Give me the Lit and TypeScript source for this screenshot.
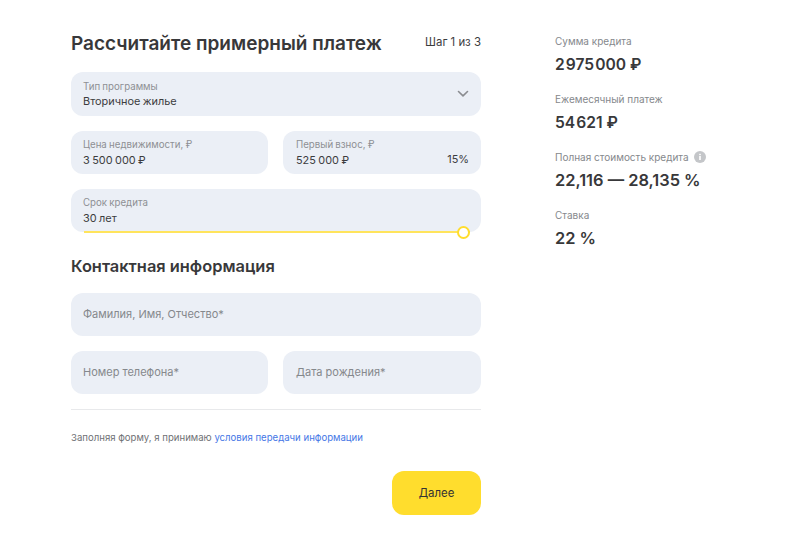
import { LitElement, html, css } from "lit";
import { customElement } from "lit/decorators.js";

@customElement("app-root")
export class AppRoot extends LitElement {
  static styles = css`
    :host { display: block; width: 800px; height: 559px; background: #fff; font-family: Inter, "Noto Sans", sans-serif; color: #333; overflow: hidden; }
    .page { display: flex; padding: 31px 0 0 71px; }
    .form { width: 410px; display: flex; flex-direction: column; }
    .head { display: flex; justify-content: space-between; height: 41px; }
    h2 { margin: 0; font-size: 19px; line-height: 26px; font-weight: 600; color: #38383a; }
    .sub h2 { font-size: 16.4px; line-height: 20px; }
    .step { font-size: 11.4px; line-height: 22px; color: #3c3c3e; }
    .row { display: flex; gap: 15px; margin-bottom: 15px; }
    .field { position: relative; flex: 1; min-width: 0; height: 43px; box-sizing: border-box; background: #ebeff6; border-radius: 12px; padding: 7px 12px 0; display: flex; flex-direction: column; }
    .field.tall { height: 44px; padding-top: 8px; }
    .field.tall .value { margin-top: -1px; }
    .field.left { flex: 0 0 197px; }
    .field.right { padding-left: 13px; }
    .label { font-size: 9.7px; line-height: 14px; color: #8e9094; word-spacing: -0.5px; }
    .value { font-size: 10.9px; line-height: 16px; color: #3c3c3e; word-spacing: -0.6px; }
    .ph { font-size: 11px; line-height: 43px; color: #85888c; margin-top: -7px; }
    .pct { position: absolute; right: 12px; top: 20px; font-size: 10.9px; line-height: 16px; color: #3c3c3e; }
    .chev { position: absolute; right: 12px; top: 18px; }
    .slider { position: absolute; left: 13px; right: 11px; bottom: -1px; height: 2px; background: #ffe45c; }
    .thumb { position: absolute; right: 0; top: -5.5px; width: 13px; height: 13px; box-sizing: border-box; border: 2px solid #ffdd2d; border-radius: 50%; background: #fff; }
    .sub { height: 46px; padding-top: 9px; box-sizing: border-box; }
    .rule { border: 0; border-top: 1px solid #e8e9eb; margin: 0; }
    .legal { font-size: 9.6px; line-height: 14px; color: #6f7175; margin: 21px 0 0; }
    .legal a { color: #4577e6; text-decoration: none; }
    .actions { display: flex; justify-content: flex-end; margin-top: 26px; }
    button { width: 89px; height: 44px; border: 0; border-radius: 12px; background: #ffdd2d; font: 400 11.4px Inter, sans-serif; color: #333; }
    .side { margin: 3px 0 0 74px; display: flex; flex-direction: column; gap: 15px; }
    .stat { height: 43px; }
    .stat .k { font-size: 10px; line-height: 14px; color: #85888c; display: flex; align-items: center; gap: 5px; }
    .stat .v { font-size: 16.4px; line-height: 20px; font-weight: 600; color: #38383a; margin-top: 6px; }
    .stat .v.num { font-size: 15.6px; margin-top: 7px; }
    .digits { word-spacing: -2.8px; }
    .info { display: block; }
  `;

  render() {
    return html`<div class="page">
      <section class="form">
        <div class="head"><h2>Рассчитайте примерный платеж</h2><span class="step">Шаг 1 из 3</span></div>
        <div class="row"><div class="field tall"><span class="label">Тип программы</span><span class="value">Вторичное жилье</span>
          <svg class="chev" width="12" height="8" viewBox="0 0 12 8"><path d="M1.5 1.5 6 5.8l4.5-4.3" fill="none" stroke="#8a8c90" stroke-width="1.6" stroke-linecap="round" stroke-linejoin="round"/></svg></div></div>
        <div class="row"><div class="field left"><span class="label">Цена недвижимости, ₽</span><span class="value">3 500 000 ₽</span></div>
          <div class="field right"><span class="label">Первый взнос, ₽</span><span class="value">525 000 ₽</span><span class="pct">15%</span></div></div>
        <div class="row"><div class="field"><span class="label">Срок кредита</span><span class="value">30 лет</span><div class="slider"><div class="thumb"></div></div></div></div>
        <div class="sub"><h2>Контактная информация</h2></div>
        <div class="row"><div class="field"><span class="ph">Фамилия, Имя, Отчество*</span></div></div>
        <div class="row"><div class="field left"><span class="ph">Номер телефона*</span></div><div class="field right"><span class="ph">Дата рождения*</span></div></div>
        <hr class="rule" />
        <p class="legal">Заполняя форму, я принимаю <a href="#">условия передачи информации</a></p>
        <div class="actions"><button>Далее</button></div>
      </section>
      <aside class="side">
        <div class="stat"><div class="k">Сумма кредита</div><div class="v num"><span class="digits">2 975 000</span> ₽</div></div>
        <div class="stat"><div class="k">Ежемесячный платеж</div><div class="v num"><span class="digits">54 621</span> ₽</div></div>
        <div class="stat"><div class="k">Полная стоимость кредита
          <svg class="info" width="12" height="12" viewBox="0 0 12 12"><circle cx="6" cy="6" r="6" fill="#c4c6c9"/><rect x="5.2" y="5" width="1.6" height="4" fill="#fff"/><rect x="5.2" y="2.8" width="1.6" height="1.4" fill="#fff"/></svg></div><div class="v">22,116 — 28,135 %</div></div>
        <div class="stat"><div class="k">Ставка</div><div class="v">22 %</div></div>
      </aside>
    </div>`;
  }
}
